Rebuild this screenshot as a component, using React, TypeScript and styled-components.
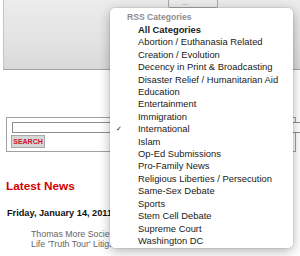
import React from 'react';
import styled, { createGlobalStyle } from 'styled-components';

const GlobalStyle = createGlobalStyle`
  html, body {
    margin: 0;
    padding: 0;
    background: #ffffff;
  }
  body {
    width: 300px;
    height: 256px;
    overflow: hidden;
    font-family: "Liberation Sans", Arial, sans-serif;
  }
`;

const Page = styled.div`
  position: relative;
  width: 300px;
  height: 256px;
  overflow: hidden;
  display: flex;
  flex-direction: column;
`;

const TopPanel = styled.div`
  margin-left: 3px;
  height: 69px;
  display: flex;
  align-items: flex-start;
  padding-left: 164px;
  background: linear-gradient(to bottom, #ececec 0%, #e3e3e3 60%, #d9d9d9 100%);
  border-left: 1px solid #c4c4c4;
  border-bottom: 1px solid #a3a3a3;
`;

const StubButton = styled.div`
  width: 50px;
  height: 8px;
  border: 1px solid #a8a8a8;
  border-top: none;
  border-radius: 0 0 2px 2px;
  display: flex;
  align-items: center;
  justify-content: center;
  gap: 14px;
  box-sizing: border-box;
  font-size: 6px;
  line-height: 6px;
  color: #9a9a9a;
`;

const SearchForm = styled.form`
  margin: 47px 0 0 6px;
  width: 290px;
  height: 35px;
  box-sizing: border-box;
  border: 1px solid #a0a0a0;
  padding: 4px 0 0 5px;
  display: flex;
  flex-direction: column;
  align-items: flex-start;
  gap: 2px;
`;

const SearchInput = styled.input`
  width: 300px;
  height: 11px;
  box-sizing: border-box;
  border: 1px solid #8c8c8c;
  padding: 0;
  margin: 0;
  background: #fff;
`;

const SearchButton = styled.button`
  margin-left: -1px;
  width: 34px;
  height: 13px;
  box-sizing: border-box;
  padding: 0;
  border: 1px solid #a9a9a9;
  background: #d6d6d6;
  color: #d0112b;
  font-family: "Liberation Sans", Arial, sans-serif;
  font-weight: bold;
  font-size: 7px;
  line-height: 11px;
  text-align: center;
`;

const SectionTitle = styled.h2`
  margin: 27px 0 0 6px;
  font-family: "Liberation Sans", Arial, sans-serif;
  font-size: 11.8px;
  line-height: 14px;
  font-weight: bold;
  color: #d40000;
`;

const DateLine = styled.div`
  margin: 15px 0 0 7px;
  font-family: "Liberation Sans", Arial, sans-serif;
  font-size: 9.2px;
  line-height: 10px;
  font-weight: bold;
  color: #111;
  white-space: nowrap;
`;

const Summary = styled.p`
  margin: 11px 0 0 31px;
  font-family: "Liberation Sans", Arial, sans-serif;
  font-size: 8.8px;
  line-height: 10px;
  color: #666;
  white-space: nowrap;
`;

const Menu = styled.div`
  position: absolute;
  left: 110px;
  top: 8px;
  width: 183px;
  height: 240px;
  box-sizing: border-box;
  padding-top: 3px;
  background: rgba(255, 255, 255, 0.98);
  border-radius: 5px;
  box-shadow: 0 3px 12px rgba(0, 0, 0, 0.3), 0 0 0 0.5px rgba(0, 0, 0, 0.12);
  font-family: "Liberation Sans", Arial, sans-serif;
`;

const MenuHeader = styled.div`
  padding-left: 17px;
  height: 13px;
  line-height: 13px;
  font-size: 8.6px;
  font-weight: bold;
  color: #8d8d8d;
`;

const MenuItem = styled.div<{ $bold?: boolean }>`
  display: flex;
  align-items: center;
  height: 12.42px;
  line-height: 12.42px;
  font-size: 9.4px;
  font-weight: ${(p) => (p.$bold ? 'bold' : 'normal')};
  color: #1a1a1a;
  white-space: nowrap;
`;

const CheckCell = styled.span`
  width: 22px;
  padding-left: 6px;
  font-size: 7px;
  color: #222;
`;

const categories = [
  'All Categories',
  'Abortion / Euthanasia Related',
  'Creation / Evolution',
  'Decency in Print & Broadcasting',
  'Disaster Relief / Humanitarian Aid',
  'Education',
  'Entertainment',
  'Immigration',
  'International',
  'Islam',
  'Op-Ed Submissions',
  'Pro-Family News',
  'Religious Liberties / Persecution',
  'Same-Sex Debate',
  'Sports',
  'Stem Cell Debate',
  'Supreme Court',
  'Washington DC',
];

const selected = 'International';

export default function App() {
  return (
    <>
      <GlobalStyle />
      <Page>
        <TopPanel>
          <StubButton>
            <span>—</span>
            <span>·</span>
          </StubButton>
        </TopPanel>
        <SearchForm onSubmit={(e) => e.preventDefault()}>
          <SearchInput type="text" />
          <SearchButton type="submit">SEARCH</SearchButton>
        </SearchForm>
        <SectionTitle>Latest News</SectionTitle>
        <DateLine>Friday, January 14, 2011</DateLine>
        <Summary>
          Thomas More Society Wins Ruling for Pro-
          <br />
          Life 'Truth Tour' Litigation
        </Summary>
        <Menu>
          <MenuHeader>RSS Categories</MenuHeader>
          {categories.map((c, i) => (
            <MenuItem key={c} $bold={i === 0}>
              <CheckCell>{c === selected ? '✓' : ''}</CheckCell>
              {c}
            </MenuItem>
          ))}
        </Menu>
      </Page>
    </>
  );
}
